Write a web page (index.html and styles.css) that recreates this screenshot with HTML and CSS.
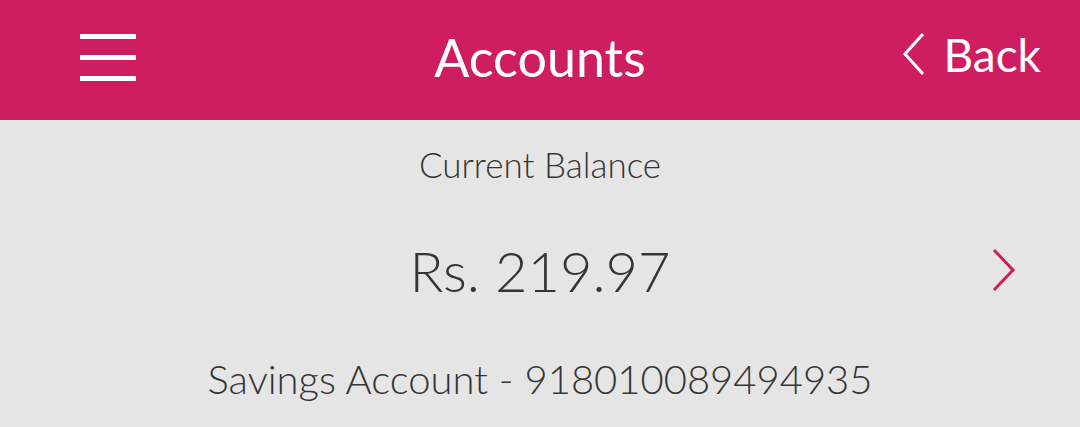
FILE: index.html
```html
<!DOCTYPE html>
<html>
<head>
<meta charset="utf-8">
<link rel="stylesheet" href="styles.css">
</head>
<body>
<header class="topbar">
  <div class="menu">
    <span class="bar"></span><span class="bar"></span><span class="bar"></span>
  </div>
  <h1 class="title">Accounts</h1>
  <div class="back">
    <svg class="back-icon" width="24" height="44" viewBox="0 0 24 44"><path d="M21 2 L3 22 L21 42" fill="none" stroke="#fff" stroke-width="3"/></svg>
    <span>Back</span>
  </div>
</header>
<main class="balance">
  <div class="label">Current Balance</div>
  <div class="amount-row">
    <div class="amount">Rs. 219.97</div>
    <svg class="next" width="26" height="44" viewBox="0 0 26 44"><path d="M3 2 L22 22 L3 42" fill="none" stroke="#d11d60" stroke-width="3"/></svg>
  </div>
  <div class="account">Savings Account - 918010089494935</div>
</main>
</body>
</html>
```
FILE: styles.css
```css
html, body { margin: 0; padding: 0; }
body {
  width: 1080px;
  height: 427px;
  background: #e5e5e5;
  font-family: Lato, "Open Sans", sans-serif;
  overflow: hidden;
}
.topbar {
  height: 120px;
  background: #cf1d61;
  display: flex;
  align-items: center;
  position: relative;
  color: #fff;
}
.menu {
  display: flex;
  flex-direction: column;
  gap: 16px;
  margin-left: 80px;
  margin-top: -6px;
}
.bar {
  display: block;
  width: 56px;
  height: 5px;
  background: #fff;
}
.title {
  position: absolute;
  left: 0; right: 0;
  text-align: center;
  margin: 0;
  font-weight: 400;
  font-size: 52px;
  top: 27px;
  line-height: 60px;
  pointer-events: none;
}
.back {
  margin-left: auto;
  margin-right: 39px;
  display: flex;
  align-items: center;
  gap: 17px;
  font-size: 46px;
  margin-top: -12px;
}
.back-icon { display: block; }
.balance {
  display: flex;
  flex-direction: column;
  align-items: center;
  color: #353535;
  font-family: "Lato Light", Lato, "Open Sans", sans-serif;
  font-weight: 300;
  position: relative;
}
.label {
  font-size: 35px;
  margin-top: 21px;
  line-height: 46px;
}
.amount-row {
  width: 100%;
  display: flex;
  justify-content: center;
  position: relative;
  margin-top: 54px;
}
.amount {
  font-size: 56px;
  line-height: 60px;
}
.next {
  position: absolute;
  right: 63px;
  top: 7px;
}
.account {
  font-size: 40px;
  line-height: 50px;
  margin-top: 53px;
}
```
